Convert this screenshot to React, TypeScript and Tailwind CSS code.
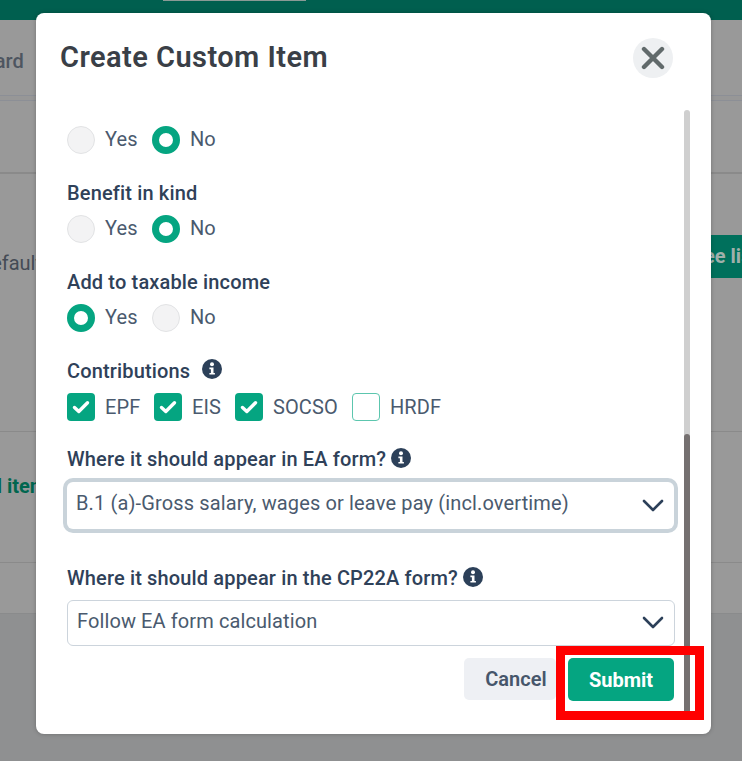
import React from "react";

const font = { fontFamily: '"Roboto", "Inter", sans-serif' };

function Radio({ on }: { on?: boolean }) {
  return on ? (
    <span className="w-[28px] h-[28px] rounded-full border-[7px] border-[#05a581] bg-white shrink-0" />
  ) : (
    <span className="w-[28px] h-[28px] rounded-full border border-[#e2e3e5] bg-[#f3f3f4] shrink-0" />
  );
}

function RadioRow({ yes, className }: { yes?: boolean; className?: string }) {
  return (
    <div className={`flex items-center h-[28px] text-[20px] tracking-[0.1px] text-[#4a5a6e] ${className ?? ""}`}>
      <Radio on={yes} />
      <span className="ml-[10px] w-[47px] -mt-[3px]">Yes</span>
      <Radio on={!yes} />
      <span className="ml-[10px] -mt-[3px]">No</span>
    </div>
  );
}

function Check({ label, on, gap }: { label: string; on?: boolean; gap: string }) {
  return (
    <div className={`flex items-center ${gap}`}>
      {on ? (
        <span className="w-[28px] h-[28px] rounded-[4px] bg-[#05a581] flex items-center justify-center shrink-0">
          <svg width="18" height="14" viewBox="0 0 18 14" fill="none">
            <path d="M2.5 7.5 L6.8 11.5 L15.5 2.8" stroke="#fff" strokeWidth="3.4" strokeLinecap="round" strokeLinejoin="round" />
          </svg>
        </span>
      ) : (
        <span className="w-[28px] h-[28px] rounded-[4px] border border-[#5cc6ae] bg-white shrink-0" />
      )}
      <span className="ml-[10px] text-[20px] tracking-[0.1px] text-[#4a5a6e]">{label}</span>
    </div>
  );
}

function Info({ className }: { className?: string }) {
  return (
    <svg className={className} width="20" height="20" viewBox="0 0 20 20">
      <circle cx="10" cy="10" r="10" fill="#2c4059" />
      <circle cx="10" cy="5.2" r="2" fill="#fff" />
      <path d="M7.4 8.6 H11.5 V13.9 H12.9 V15.6 H7.4 V13.9 H8.9 V10.3 H7.4 Z" fill="#fff" />
    </svg>
  );
}

function Chevron({ className }: { className?: string }) {
  return (
    <svg width="22" height="13" viewBox="0 0 22 13" fill="none" className={`shrink-0 ${className ?? ""}`}>
      <path d="M2 2 L11 11 L20 2" stroke="#2c4059" strokeWidth="2.6" strokeLinecap="round" strokeLinejoin="round" />
    </svg>
  );
}

const label = "text-[20px] leading-[24px] tracking-[0.15px] font-medium text-[#2f4159]";

export default function App() {
  return (
    <div className="relative w-[742px] h-[761px] overflow-hidden bg-[#8f9091]" style={font}>
      {/* dimmed page behind the dialog */}
      <div className="h-[20px] bg-[#005f4f] flex justify-start">
        <div className="ml-[163px] w-[143px] h-[1px] bg-[#8a9a96]" />
      </div>
      <div className="h-[75px] bg-[#999999] flex items-center text-[20px] text-[#4e5560] font-medium pt-[6px]">
        <span className="-ml-[73px] whitespace-nowrap">Dashboard</span>
      </div>
      <div className="h-[6px] bg-[#979797] border-y border-[#8c8f96]" />
      <div className="h-[73px] bg-[#999999] border-b-2 border-[#8a8a8a]" />
      <div className="h-[258px] bg-[#999999] border-b border-[#8a8a8a] relative text-[20px] text-[#444b55]">
        <span className="absolute left-[-22px] top-[74px]">Default</span>
        <span className="absolute left-[650px] top-[61px] h-[43px] w-[120px] bg-[#00705c] text-[#9fb0ab] font-bold leading-[43px] whitespace-nowrap pl-[54px]">
          ee list
        </span>
      </div>
      <div className="h-[131px] bg-[#999999] border-b border-[#8a8a8a] relative text-[20px] text-[#00664f] font-bold">
        <span className="absolute left-[-22px] top-[39px] whitespace-nowrap">All items</span>
      </div>
      <div className="h-[51px] bg-[#999999] border-b border-[#8a8b8c]" />

      {/* dialog */}
      <div className="absolute left-[36px] top-[13px] w-[675px] h-[721px] bg-white rounded-[8px] shadow-[0_0_4px_rgba(0,0,0,0.25)]">
        <div className="flex items-center justify-between pl-[24px] pr-[38px] pt-[25px]">
          <h1 className="text-[29px] leading-[38px] tracking-[0.45px] font-semibold text-[#3a3f47] -mt-[2px]">Create Custom Item</h1>
          <button className="w-[40px] h-[40px] rounded-full bg-[#eef0f2] flex items-center justify-center">
            <svg width="24" height="24" viewBox="0 0 24 24" fill="none">
              <path d="M3 3 L21 21 M21 3 L3 21" stroke="#616a6b" strokeWidth="4.4" strokeLinecap="round" />
            </svg>
          </button>
        </div>

        <div className="absolute left-[648px] top-[97px] w-[6px] h-[610px] rounded-full bg-[#cfcfcf] flex flex-col justify-end">
          <div className="h-[286px] w-full rounded-full bg-[#757070]" />
        </div>

        <div className="pl-[31px] w-[638px] pt-[48px]">
          <RadioRow />
          <div className={`${label} mt-[27px]`}>Benefit in kind</div>
          <RadioRow className="mt-[10px]" />
          <div className={`${label} mt-[27px]`}>Add to taxable income</div>
          <RadioRow yes className="mt-[10px]" />
          <div className={`${label} mt-[27px] flex items-center`}>
            Contributions <Info className="ml-[12px] -mt-[4px]" />
          </div>
          <div className="flex items-center mt-[10px] h-[28px]">
            <Check label="EPF" on gap="w-[87px]" />
            <Check label="EIS" on gap="w-[81px]" />
            <Check label="SOCSO" on gap="w-[117px]" />
            <Check label="HRDF" gap="" />
          </div>
          <div className={`${label} mt-[26px] flex items-center`}>
            Where it should appear in EA form? <Info className="ml-[5px] -mt-[3px]" />
          </div>
          <div className="mt-[11px] h-[47px] w-[607px] rounded-[6px] bg-white ring-[4px] ring-[#c9d3da] flex items-center justify-between pl-[9px] pr-[10px] text-[20px] tracking-[0.14px] text-[#4a5a6e]">
            <span className="-mt-[6px]">B.1 (a)-Gross salary, wages or leave pay (incl.overtime)</span>
            <Chevron />
          </div>
          <div className={`${label} mt-[37px] flex items-center`}>
            Where it should appear in the CP22A form? <Info className="ml-[5px] -mt-[3px]" />
          </div>
          <div className="mt-[10px] h-[46px] w-[608px] rounded-[6px] bg-white border border-[#ccd4dc] flex items-center justify-between pl-[9px] pr-[10px] text-[20px] tracking-[0.1px] text-[#4a5a6e]">
            <span className="-mt-[4px]">Follow EA form calculation</span>
            <Chevron className="-mt-[2px]" />
          </div>
          <div className="flex justify-end gap-[12px] w-[607px] mt-[12px]">
            <button className="w-[92px] h-[42px] rounded-[5px] bg-[#eef0f4] text-[20px] font-semibold text-[#46566b] pl-[12px]">Cancel</button>
            <button className="w-[106px] h-[43px] rounded-[5px] bg-[#05a581] text-[20px] font-bold text-white">Submit</button>
          </div>
        </div>
      </div>

      {/* red annotation */}
      <div className="absolute left-[556px] top-[646px] w-[148px] h-[74px] border-[9px] border-[#ff0000]" />
    </div>
  );
}
